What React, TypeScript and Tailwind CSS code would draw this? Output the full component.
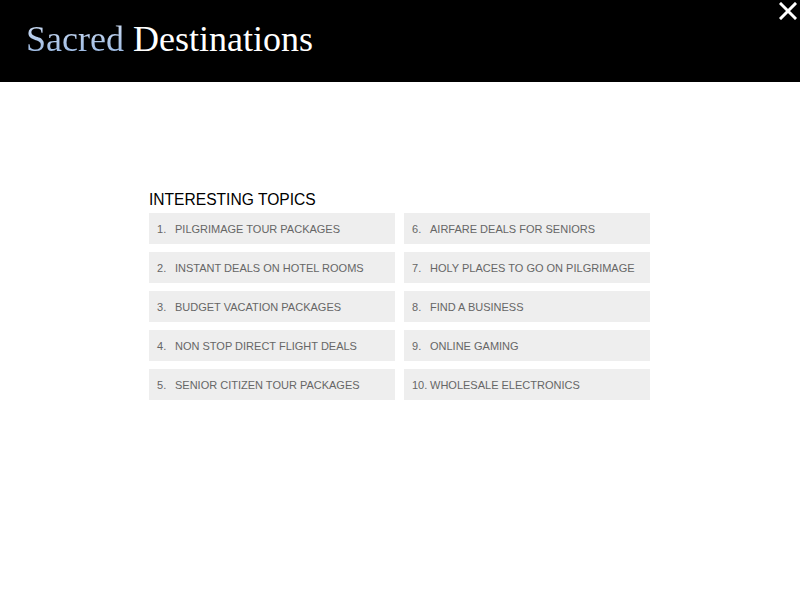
const topics = [
  "PILGRIMAGE TOUR PACKAGES",
  "INSTANT DEALS ON HOTEL ROOMS",
  "BUDGET VACATION PACKAGES",
  "NON STOP DIRECT FLIGHT DEALS",
  "SENIOR CITIZEN TOUR PACKAGES",
  "AIRFARE DEALS FOR SENIORS",
  "HOLY PLACES TO GO ON PILGRIMAGE",
  "FIND A BUSINESS",
  "ONLINE GAMING",
  "WHOLESALE ELECTRONICS",
];

function CloseIcon() {
  return (
    <svg width="18" height="18" viewBox="0 0 18 18" className="block">
      <path d="M2 2L16 16M16 2L2 16" stroke="#fff" strokeWidth="3" strokeLinecap="square" />
    </svg>
  );
}

export default function App() {
  return (
    <div className="min-h-[600px] bg-white" style={{ fontFamily: '"Liberation Sans", Arial, sans-serif' }}>
      <header className="relative h-[82px] bg-black pl-[26px] pt-[18px]">
        <h1 className="text-[36px] leading-[42px] font-['Liberation_Serif',Georgia,serif]">
          <span className="bg-gradient-to-b from-[#d2e0f5] to-[#94b4df] bg-clip-text text-transparent">Sacred</span>{" "}
          <span className="text-white">Destinations</span>
        </h1>
        <button className="absolute right-[3px] top-[2px] p-0">
          <CloseIcon />
        </button>
      </header>

      <main className="pt-[108px] pl-[149px]">
        <h2 className="text-[15.6px] leading-[20px] text-black mb-[3px]">INTERESTING TOPICS</h2>
        <div className="grid w-[501px] grid-flow-col grid-cols-2 grid-rows-5 gap-x-[9px] gap-y-[8px]">
          {topics.map((t, i) => (
            <a
              key={t}
              href="#"
              className="flex h-[31px] items-center whitespace-nowrap bg-[#eeeeee] pl-[8px] pt-[1px] text-[11px] text-[#666666]"
            >
              <span className="w-[18px] shrink-0">{i + 1}.</span>
              <span>{t}</span>
            </a>
          ))}
        </div>
      </main>
    </div>
  );
}
